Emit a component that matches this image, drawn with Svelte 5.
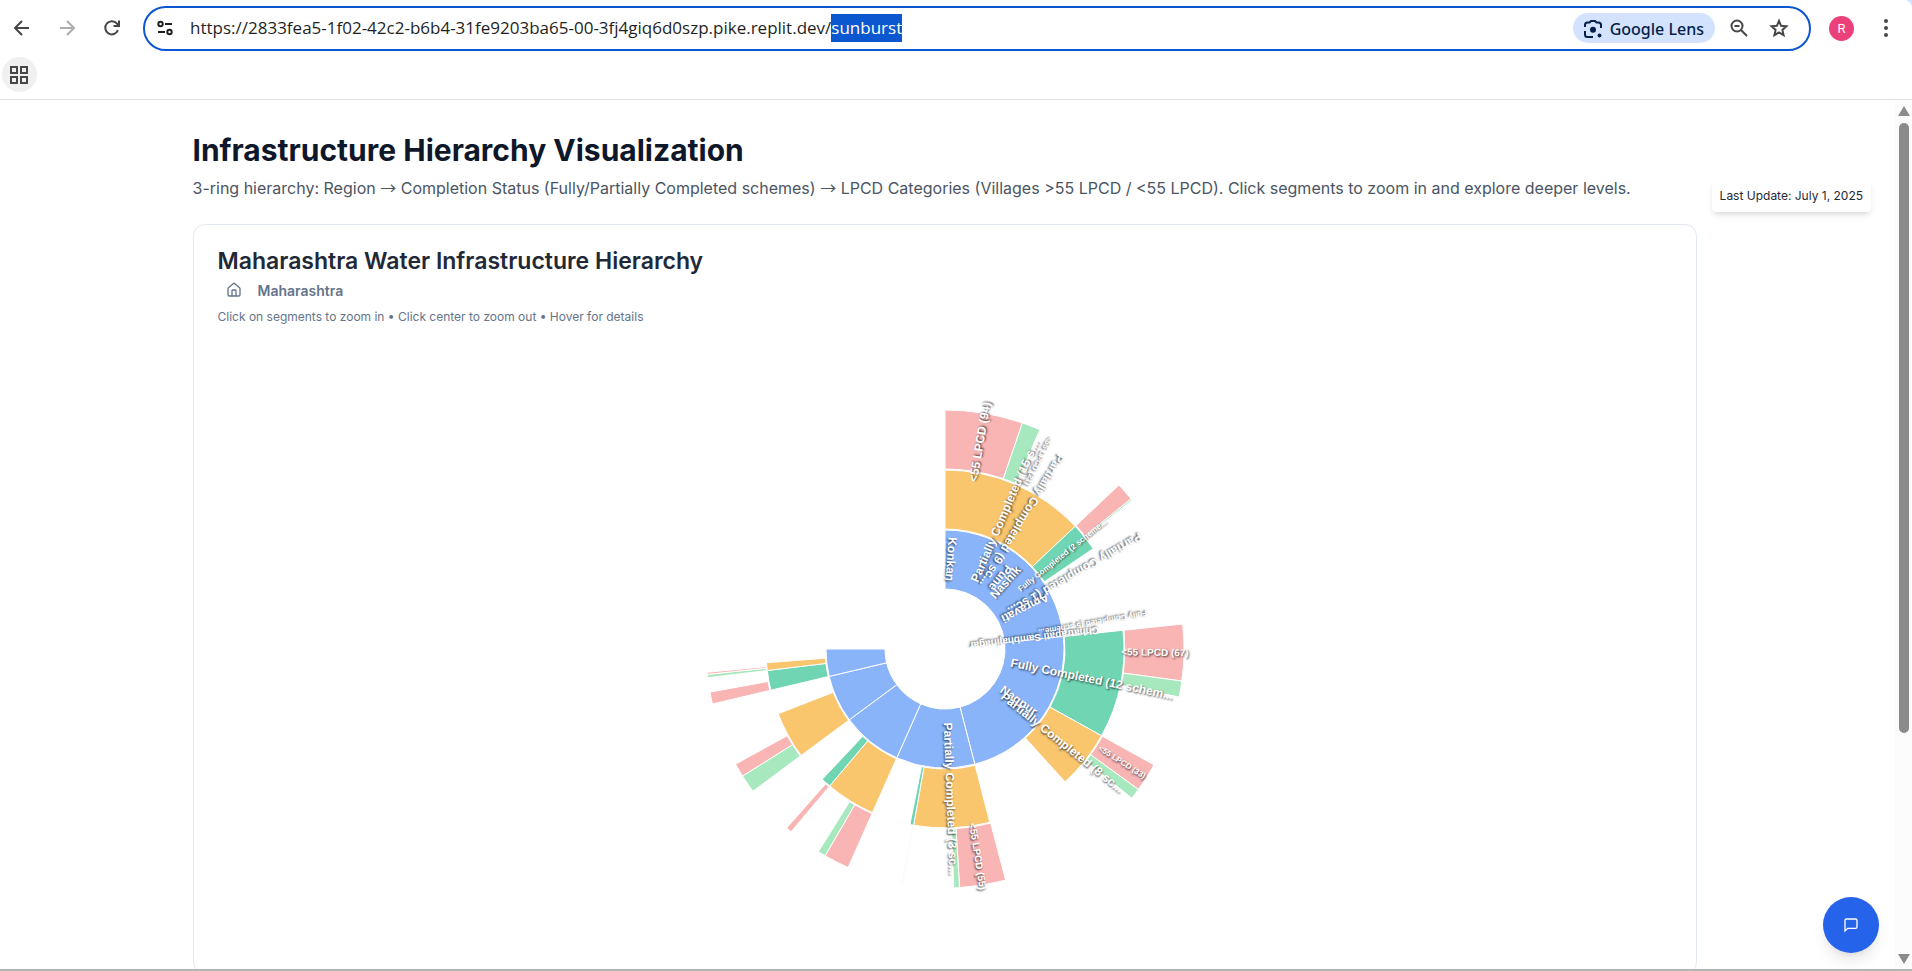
<script>
  import { onMount } from 'svelte';

  const url = 'https://2833fea5-1f02-42c2-b6b4-31fe9203ba65-00-3fj4giq6d0szp.pike.replit.dev/sunburst';
  let address;

  onMount(() => {
    address.focus({ preventScroll: true });
    address.setSelectionRange(url.lastIndexOf('/') + 1, url.length);
  });

  const RING = 60;

  // [ring, start angle, end angle, kind]
  const segments = [
    [1, 0, 84, 'region'],
    [1, 84, 165.5, 'region'],
    [1, 165.5, 203.9, 'region'],
    [1, 203.9, 233.5, 'region'],
    [1, 233.5, 256.7, 'region'],
    [1, 256.7, 270, 'region'],
    [2, 0, 46.7, 'partial'],
    [2, 46.7, 55.9, 'full'],
    [2, 84, 119, 'full'],
    [2, 119, 137.9, 'partial'],
    [2, 165.5, 190.1, 'partial'],
    [2, 190.1, 191.3, 'full'],
    [2, 203.9, 220.1, 'partial'],
    [2, 220.1, 223.3, 'full'],
    [2, 233.5, 248.8, 'partial'],
    [2, 256.7, 263.1, 'full'],
    [2, 263.1, 265.6, 'partial'],
    [3, 0, 18.9, 'below'],
    [3, 18.9, 23.4, 'above'],
    [3, 46.7, 51.1, 'below'],
    [3, 51.1, 51.5, 'above'],
    [3, 84, 97.7, 'below'],
    [3, 97.7, 101.6, 'above'],
    [3, 119, 126, 'below'],
    [3, 126, 128.6, 'above'],
    [3, 165.3, 176.5, 'below'],
    [3, 176.5, 177.9, 'above'],
    [3, 190.2, 190.4, 'below'],
    [3, 203.9, 210.1, 'below'],
    [3, 210.1, 212, 'above'],
    [3, 220.1, 221.5, 'below'],
    [3, 233.5, 237.9, 'above'],
    [3, 237.9, 241.2, 'below'],
    [3, 256.7, 259.6, 'below'],
    [3, 263.1, 263.9, 'above'],
    [3, 263.9, 264.4, 'below']
  ];

  // [ring, angle, font size, flipped, text]
  const labels = [
    [1, 4, 12, true, 'Konkan'],
    [1, 38, 12, true, 'Pune'],
    [1, 42, 12, false, 'Nashik'],
    [1, 63, 12, true, 'Amravati'],
    [1, 83, 10, true, 'Chhatrapati Sambhajinagar'],
    [1, 124.8, 12, false, 'Nagpur'],
    [2, 23.4, 12, false, 'Partially Completed (15 s...'],
    [2, 31, 12, true, 'Partially Completed (9 sc...'],
    [2, 51.3, 8, false, 'Fully Completed (2 scheme...'],
    [2, 60, 12, true, 'Partially Completed (1 sc...'],
    [2, 80, 8, true, 'Fully Completed (5 scheme...'],
    [2, 101.5, 12, false, 'Fully Completed (12 schem...'],
    [2, 128.5, 12, false, 'Partially Completed (8 sc...'],
    [2, 177.8, 12, false, 'Partially Completed (3 sc...'],
    [3, 9.5, 12, false, '<55 LPCD (94)'],
    [3, 26.5, 8, true, '<55 LPCD (21)'],
    [3, 90.9, 10, false, '<55 LPCD (67)'],
    [3, 122.5, 8, false, '<55 LPCD (33)'],
    [3, 171, 10, false, '<55 LPCD (55)']
  ];

  function point(r, deg) {
    const a = (deg * Math.PI) / 180;
    return `${(r * Math.sin(a)).toFixed(2)} ${(-r * Math.cos(a)).toFixed(2)}`;
  }

  function arc(ring, a0, a1) {
    const r0 = ring * RING;
    const r1 = r0 + RING - 1;
    return `M${point(r0, a0)}L${point(r1, a0)}A${r1} ${r1} 0 0 1 ${point(r1, a1)}L${point(r0, a1)}A${r0} ${r0} 0 0 0 ${point(r0, a0)}Z`;
  }

  function place(ring, angle, flipped) {
    const r = (ring + 0.5) * RING;
    return `rotate(${angle - 90}) translate(${r} 0)${flipped ? ' rotate(180)' : ''}`;
  }
</script>

<div class="window">
  <header>
    <div class="toolbar">
      <button class="tool" aria-label="Back">
        <svg width="20" height="20" viewBox="0 0 20 20"><path d="M17 10H3.5M10 3L3 10l7 7" /></svg>
      </button>
      <button class="tool faded" aria-label="Forward">
        <svg width="20" height="20" viewBox="0 0 20 20"><path d="M3 10h13.5M10 3l7 7-7 7" /></svg>
      </button>
      <button class="tool" aria-label="Reload">
        <svg width="20" height="20" viewBox="0 0 20 20"><path d="M16 12.2A6.6 6.6 0 1 1 15 5.600L17 8M17 2.500V8H11.500" /></svg>
      </button>
      <div class="omnibox">
        <button class="site" aria-label="Site information">
          <svg width="18" height="18" viewBox="0 0 18 18"><circle cx="4.500" cy="5" r="2.200" /><path d="M9 5h7M2 13h7" /><circle cx="13.500" cy="13" r="2.200" /></svg>
        </button>
        <input bind:this={address} type="text" value={url} aria-label="Address" spellcheck="false" />
        <button class="lens">
          <svg width="20" height="20" viewBox="0 0 20 20"><path d="M2 8V6q0-2.500 2.500-2.500h2L8 2h4l1.500 1.500h2Q18 3.500 18 6v3M2 12v3.500Q2 18 4.500 18H10" /><circle class="dot" cx="10" cy="10.800" r="3" /><circle class="dot" cx="16.500" cy="16.500" r="1.900" /></svg>
          <span>Google Lens</span>
        </button>
        <button class="small" aria-label="Zoom">
          <svg width="20" height="20" viewBox="0 0 20 20"><circle cx="8" cy="8" r="5.500" /><path d="M12 12l6 6M5.500 8h5" /></svg>
        </button>
        <button class="small" aria-label="Bookmark this page">
          <svg width="20" height="20" viewBox="0 0 20 20"><path d="M10 2.800l2.100 5 5.300.5-4 3.600 1.200 5.300L10 14.400l-4.600 2.800 1.200-5.300-4-3.600 5.300-.5z" /></svg>
        </button>
      </div>
      <button class="avatar" aria-label="Profile">R</button>
      <button class="more" aria-label="Menu">
        <svg width="6" height="20" viewBox="0 0 6 20"><circle cx="3" cy="3" r="2" /><circle cx="3" cy="10" r="2" /><circle cx="3" cy="17" r="2" /></svg>
      </button>
    </div>
    <div class="bookmarks">
      <button class="apps" aria-label="Apps">
        <svg width="20" height="20" viewBox="0 0 20 20"><path d="M1 2h6v6H1zM11 2h6v6h-6zM1 12h6v6H1zM11 12h6v6h-6z" /></svg>
      </button>
    </div>
  </header>

  <div class="viewport">
    <div class="content">
      <main>
        <h1>Infrastructure Hierarchy Visualization</h1>
        <p class="lead">3-ring hierarchy: Region <span class="arrow">→</span> Completion Status (Fully/Partially Completed schemes) <span class="arrow">→</span> LPCD Categories (Villages &gt;55 LPCD / &lt;55 LPCD). Click segments to zoom in and explore deeper levels.</p>
        <section class="card">
          <h2>Maharashtra Water Infrastructure Hierarchy</h2>
          <nav>
            <button class="crumb" aria-label="Home">
              <svg width="16" height="16" viewBox="0 0 24 24"><path d="M15 21v-8a1 1 0 0 0-1-1h-4a1 1 0 0 0-1 1v8" /><path d="M3 10a2 2 0 0 1 .7-1.500l7-6a2 2 0 0 1 2.600 0l7 6A2 2 0 0 1 21 10v9a2 2 0 0 1-2 2H5a2 2 0 0 1-2-2z" /></svg>
            </button>
            <button class="crumb">Maharashtra</button>
          </nav>
          <p class="hint">Click on segments to zoom in • Click center to zoom out • Hover for details</p>
          <svg class="chart" viewBox="-300 -300 600 600" role="img" aria-label="Water infrastructure sunburst">
            {#each segments as [ring, a0, a1, kind]}
              <path class={kind} d={arc(ring, a0, a1)} />
            {/each}
            {#each labels as [ring, angle, size, flipped, text]}
              <text transform={place(ring, angle, flipped)} dy="0.35em" font-size={size}>{text}</text>
            {/each}
          </svg>
        </section>
      </main>
    </div>
    <div class="updated">Last Update: July 1, 2025</div>
    <button class="chat" aria-label="Open chat">
      <svg width="16" height="16" viewBox="0 0 24 24"><path d="M21 15a2 2 0 0 1-2 2H7l-4 4V5a2 2 0 0 1 2-2h14a2 2 0 0 1 2 2z" /></svg>
    </button>
    <div class="scrollbar">
      <svg width="12" height="10" viewBox="0 0 12 10"><path d="M6 0l6 10H0z" /></svg>
      <div class="track"><div class="thumb"></div></div>
      <svg width="12" height="10" viewBox="0 0 12 10"><path d="M0 0h12L6 10z" /></svg>
    </div>
  </div>
</div>

<style>
  :global(body) {
    background: #d3e3fd;
    font-family: Inter, "Liberation Sans", sans-serif;
  }
  * {
    box-sizing: border-box;
  }
  button {
    display: flex;
    align-items: center;
    justify-content: center;
    flex: none;
    padding: 0;
    border: 0;
    background: none;
    color: inherit;
    font: inherit;
  }
  h1, h2, p {
    margin: 0;
  }
  button svg {
    fill: none;
    stroke: currentColor;
    stroke-width: 2;
  }
  .window {
    display: flex;
    flex-direction: column;
    height: 100vh;
    overflow: hidden;
    border-bottom: 2px solid #b4b4b4;
    border-top-right-radius: 8px;
    background: #fff;
  }
  header {
    flex: none;
    border-bottom: 1px solid #dfe1e0;
    color: #474747;
  }
  .toolbar {
    display: flex;
    align-items: center;
    height: 56px;
    padding: 0 23px 0 12px;
  }
  .tool {
    width: 20px;
    margin-right: 25px;
  }
  .faded {
    color: #adadad;
  }
  .omnibox {
    display: flex;
    flex: 1;
    align-items: center;
    min-width: 0;
    height: 45px;
    padding: 0 20px 0 10px;
    margin-right: 18px;
    margin-left: -4px;
    border: 2px solid #0b57d0;
    border-radius: 23px;
  }
  .site {
    color: #1f1f1f;
    width: 20px;
    margin-right: 15px;
  }
  input {
    flex: 1;
    min-width: 0;
    height: 28px;
    padding: 0;
    border: 0;
    outline: 0;
    color: #1f1f1f;
    font: 17px/28px "Open Sans", "Noto Sans", sans-serif;
  }
  input::selection {
    background: #0b57d0;
    color: #fff;
  }
  .lens {
    gap: 7px;
    height: 30px;
    padding: 1px 11px 0 10px;
    border-radius: 15px;
    background: #d3e3fd;
    color: #041e49;
    font: 500 16px/24px "Noto Sans", sans-serif;
  }
  .lens .dot {
    fill: currentColor;
    stroke: none;
  }
  .small {
    width: 20px;
    margin-left: 14px;
  }
  .small + .small {
    margin-left: 20px;
  }
  .avatar {
    width: 25px;
    height: 25px;
    margin-right: 29px;
    border-radius: 50%;
    background: #ec407a;
    color: #fff;
    font: 13px/25px Roboto, sans-serif;
  }
  .more svg {
    fill: currentColor;
    stroke: none;
  }
  .bookmarks {
    display: flex;
    height: 43px;
    padding: 1px 2px;
  }
  .apps {
    width: 35px;
    height: 35px;
    border-radius: 50%;
    background: #f0f0f0;
  }
  .viewport {
    position: relative;
    display: flex;
    flex: 1;
    min-height: 0;
    overflow: hidden;
  }
  .content {
    flex: 1;
    min-width: 0;
    padding-right: 6px;
  }
  main {
    max-width: 1504px;
    margin: 0 auto;
    padding-top: 30px;
  }
  h1 {
    color: #0f172a;
    font-size: 30px;
    font-weight: 700;
    line-height: 40px;
  }
  .lead {
    margin-top: 7px;
    color: #4b5563;
    font-size: 16px;
    line-height: 22px;
  }
  .arrow {
    font-family: "Noto Sans CJK JP", sans-serif;
    line-height: 1;
  }
  .card {
    margin-top: 25px;
    padding: 22px 24px 24px;
    border: 1px solid #e2e8f0;
    border-radius: 12px;
  }
  h2 {
    color: #1f2937;
    font-size: 23px;
    font-weight: 600;
    line-height: 28px;
  }
  nav {
    display: flex;
    align-items: center;
    gap: 16px;
    height: 30px;
    padding-left: 8px;
    color: #64748b;
    font-size: 14px;
    font-weight: 600;
  }
  .hint {
    margin-top: 2px;
    color: #64748b;
    font-size: 12px;
    line-height: 20px;
  }
  .chart {
    display: block;
    width: 600px;
    height: 600px;
    margin: 22px auto 0;
    overflow: visible;
  }
  .chart path {
    stroke: #fff;
    stroke-width: 1px;
  }
  .region { fill: #89b4fa; }
  .full { fill: #70d5b3; }
  .partial { fill: #f9c56d; }
  .below { fill: #f9b4b4; }
  .above { fill: #a7e8bf; }
  .chart text {
    fill: #fff;
    font-family: "Liberation Sans", Arial, sans-serif;
    font-weight: 700;
    text-anchor: middle;
    text-shadow: 1px 1px 2px rgba(0, 0, 0, 0.7);
  }
  .updated {
    position: absolute;
    top: 80px;
    right: 41px;
    padding: 8px;
    border-radius: 4px;
    background: #fff;
    box-shadow: 0 4px 6px -1px rgba(0, 0, 0, 0.1), 0 2px 4px -2px rgba(0, 0, 0, 0.1);
    color: #1f2937;
    font-size: 12px;
    line-height: 16px;
  }
  .chat {
    position: absolute;
    right: 33px;
    bottom: 16px;
    width: 56px;
    height: 56px;
    border-radius: 50%;
    background: #2563eb;
    box-shadow: 0 10px 15px -3px rgba(0, 0, 0, 0.1), 0 4px 6px -4px rgba(0, 0, 0, 0.1);
    color: #fff;
  }
  .scrollbar {
    display: flex;
    flex: none;
    flex-direction: column;
    align-items: center;
    width: 17px;
    padding: 6px 0 5px;
    background: #fcfcfc;
    fill: #8b8b8b;
  }
  .track {
    flex: 1;
    width: 10px;
    margin: 7px 0;
  }
  .thumb {
    height: 74%;
    border-radius: 5px;
    background: #8b8b8b;
  }
</style>
